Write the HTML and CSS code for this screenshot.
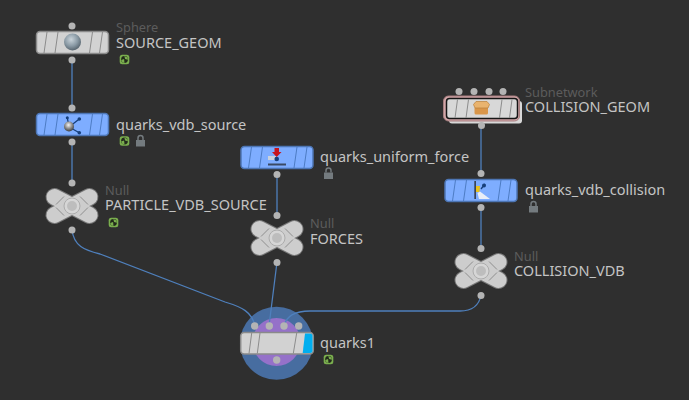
FILE: index.html
```html
<!DOCTYPE html>
<html lang="en">
<head>
<meta charset="utf-8">
<title>Network view</title>
<link rel="stylesheet" href="styles.css">
</head>
<body>
<main class="canvas">
<svg class="graph" width="689" height="400" viewBox="0 0 689 400" xmlns="http://www.w3.org/2000/svg">
  <defs>
    <radialGradient id="ball" cx="0.42" cy="0.35" r="0.7">
      <stop offset="0" stop-color="#c9d3da"/>
      <stop offset="0.55" stop-color="#8a9aa5"/>
      <stop offset="1" stop-color="#4f5c66"/>
    </radialGradient>
    <radialGradient id="ball2" cx="0.45" cy="0.35" r="0.7">
      <stop offset="0" stop-color="#f4f4f4"/>
      <stop offset="0.5" stop-color="#8e8e8e"/>
      <stop offset="1" stop-color="#2e2e2e"/>
    </radialGradient>
    <g id="stripes">
      <path d="M11 1 L8 22 M22 1 L19 22 M56.500 1 L53.500 22 M66.500 1 L63.500 22"/>
    </g>
    <g id="grey-body">
      <rect x="0.500" y="0.500" width="72" height="22" rx="3.500" class="body-grey"/>
      <use href="#stripes" class="stripe-grey"/>
    </g>
    <g id="blue-body">
      <rect x="0.500" y="0.500" width="72" height="22" rx="3.500" class="body-blue"/>
      <use href="#stripes" class="stripe-blue"/>
    </g>
    <g id="null-node">
      <path d="M-17.500 -9 L17.500 9 M-17.500 9 L17.500 -9" class="null-edge"/>
      <path d="M-17.500 -9 L17.500 9 M-17.500 9 L17.500 -9" class="null-fill"/>
      <path d="M-16 -1.500 L-8 -9.500 M16 -1.500 L8 -9.500 M-16 1.500 L-8 9.500 M16 1.500 L8 9.500" class="null-cut"/>
      <circle r="8" class="null-ring"/>
      <circle r="5" class="null-core"/>
    </g>
    <g id="badge">
      <rect x="-4.800" y="-4.800" width="9.600" height="9.600" rx="2.500" class="badge-bg"/>
      <circle r="3.400" class="badge-dark"/>
      <path d="M-3.400 0.600 L-0.400 -0.400 L0 3.400 L-2 3 Z M-0.200 -3.400 L3 -2 L3.400 0.200 L0.600 -0.600 Z" class="badge-light"/>
    </g>
    <g id="lock">
      <path d="M-2.500 -1 V-3 A2.500 2.500 0 0 1 2.500 -3 V-1" class="lock-arc"/>
      <rect x="-4.500" y="-1" width="9" height="6.500" class="lock-body"/>
    </g>
  </defs>

  <circle cx="276.500" cy="343.300" r="36.500" class="halo"/>
  <circle cx="276.500" cy="342" r="24" class="halo-inner"/>

  <g class="wire">
    <path d="M72 60 V108"/>
    <path d="M72 141 V183"/>
    <path d="M277 174 V215"/>
    <path d="M481 125 V173"/>
    <path d="M481 207 V248"/>
    <path d="M72 230 C74 246 84 250 100 254 L225 302 C242 307 252 312 255 326"/>
    <path d="M277 262 L269 326"/>
    <path d="M481 295 C479 306 472 311 460 311 H310 C294 311 286 317 284 326"/>
  </g>

  <use href="#grey-body" x="36" y="31"/>
  <circle cx="72.500" cy="42" r="8.500" fill="url(#ball)"/>
  <circle cx="72" cy="26" r="3.500" class="dot"/>
  <circle cx="72" cy="60" r="3.500" class="dot"/>

  <use href="#blue-body" x="36" y="113"/>
  <path d="M69 127 L67.300 117.700 M69 127 L79.300 119 M69 127 L79.300 132.700" class="icon-navy"/>
  <circle cx="67.300" cy="117.700" r="1.500" class="fill-navy"/>
  <circle cx="79.300" cy="119" r="1.800" class="fill-navy"/>
  <circle cx="79.300" cy="132.700" r="1.800" class="fill-navy"/>
  <circle cx="69" cy="126.500" r="5" fill="url(#ball2)"/>
  <circle cx="72" cy="108" r="3.500" class="dot"/>
  <circle cx="72" cy="142" r="3.500" class="dot"/>

  <use href="#null-node" x="72" y="206"/>
  <circle cx="72" cy="183" r="3.500" class="dot"/>
  <circle cx="72" cy="230" r="3.500" class="dot"/>

  <use href="#blue-body" x="240.500" y="146"/>
  <rect x="268" y="163.500" width="18" height="2" class="force-bar"/>
  <rect x="268" y="156" width="9" height="4" class="force-grey"/>
  <circle cx="276.700" cy="159" r="2.300" class="fill-navy"/>
  <path d="M274.500 148 H279 V152 H281.500 L276.700 157 L272 152 H274.500 Z" class="force-red"/>
  <circle cx="277" cy="174.500" r="3.500" class="dot"/>

  <use href="#null-node" x="277" y="238"/>
  <circle cx="277" cy="215.500" r="3.500" class="dot"/>
  <circle cx="277" cy="262.500" r="3.500" class="dot"/>

  <rect x="449" y="101" width="73" height="22.500" rx="3" class="sub-shadow"/>
  <rect x="443.500" y="96" width="76" height="25" rx="5" class="sub-frame"/>
  <rect x="446.500" y="98.500" width="71" height="20" rx="3" class="sub-inner"/>
  <g transform="translate(445.500 97.500)" class="stripe-grey">
    <path d="M12 2 L9.500 20.500 M23 2 L20.500 20.500 M56.500 2 L54 20.500 M66.500 2 L64 20.500"/>
  </g>
  <path d="M474.500 108 H488 V113 Q488 114.500 486.500 114.500 H476 Q474.500 114.500 474.500 113 Z" class="box-front"/>
  <path d="M473.500 104.500 L476 101.500 H487 L489.500 104.500 L488 108 H475 Z" class="box-top"/>
  <circle cx="459" cy="91.500" r="3.500" class="dot"/>
  <circle cx="474" cy="91.500" r="3.500" class="dot"/>
  <circle cx="489" cy="91.500" r="3.500" class="dot"/>
  <circle cx="503" cy="91.500" r="3.500" class="dot"/>
  <circle cx="481.500" cy="125.500" r="3.500" class="dot"/>

  <use href="#blue-body" x="444.500" y="179"/>
  <rect x="474.300" y="181" width="1.700" height="18" class="col-bar"/>
  <path d="M476 186 H480 L479.500 192 L476 192 Z" class="col-yellow"/>
  <path d="M477.500 193 L480 191.500 L490 199 H479 Z" class="col-white"/>
  <path d="M481 189 L485 184" class="icon-navy"/>
  <circle cx="484" cy="185.500" r="2" class="fill-navy"/>
  <circle cx="481" cy="173.500" r="3.500" class="dot"/>
  <circle cx="481" cy="207.500" r="3.500" class="dot"/>

  <use href="#null-node" x="481" y="271"/>
  <circle cx="481" cy="248.500" r="3.500" class="dot"/>
  <circle cx="481" cy="295.500" r="3.500" class="dot"/>

  <rect x="240.700" y="332.500" width="72.600" height="21.500" rx="3.500" class="body-grey"/>
  <path d="M305 333.500 H310 Q312.500 333.500 312.500 336 V350.500 Q312.500 353 310 353 H302.700 Z" class="flag"/>
  <path d="M251.700 333 L249 353.500 M260 333 L257.300 353.500 M296.700 333 L293.300 353.500" class="stripe-grey"/>
  <circle cx="254.700" cy="326" r="3.700" class="dot"/>
  <circle cx="269.300" cy="326" r="3.700" class="dot"/>
  <circle cx="284" cy="326" r="3.700" class="dot"/>
  <circle cx="298.700" cy="326" r="3.700" class="dot"/>
  <circle cx="276.700" cy="360" r="3.700" class="dot"/>

  <use href="#badge" x="124.500" y="59.500"/>
  <use href="#badge" x="124.500" y="141"/>
  <use href="#badge" x="113.500" y="222.500"/>
  <use href="#badge" x="328.500" y="359.500"/>
  <use href="#lock" x="140.500" y="141"/>
  <use href="#lock" x="328.500" y="173.500"/>
  <use href="#lock" x="533.500" y="207"/>
</svg>

<span class="label type l-sphere">Sphere</span>
<span class="label l-source">SOURCE_GEOM</span>
<span class="label l-vdbsource">quarks_vdb_source</span>
<span class="label type l-null1">Null</span>
<span class="label l-particle">PARTICLE_VDB_SOURCE</span>
<span class="label l-force">quarks_uniform_force</span>
<span class="label type l-null2">Null</span>
<span class="label l-forces">FORCES</span>
<span class="label type l-subnet">Subnetwork</span>
<span class="label l-collgeom">COLLISION_GEOM</span>
<span class="label l-vdbcoll">quarks_vdb_collision</span>
<span class="label type l-null3">Null</span>
<span class="label l-collvdb">COLLISION_VDB</span>
<span class="label l-quarks">quarks1</span>
</main>
</body>
</html>
```

FILE: styles.css
```css
html, body {
  margin: 0;
  padding: 0;
  background: #2f2f2f;
}
.canvas {
  position: relative;
  width: 689px;
  height: 400px;
  overflow: hidden;
  background: #2f2f2f;
}
.graph {
  position: absolute;
  left: 0;
  top: 0;
}
.label {
  position: absolute;
  font-family: "Noto Sans", "Open Sans", sans-serif;
  font-size: 14.500px;
  line-height: 16px;
  color: #c4c4c4;
  white-space: nowrap;
}
.type {
  font-size: 12.800px;
  line-height: 14px;
  color: #5c5c5c;
}
.l-sphere { left: 116px; top: 20px; }
.l-source { left: 116px; top: 34px; }
.l-vdbsource { left: 116px; top: 116px; }
.l-null1 { left: 105px; top: 183px; }
.l-particle { left: 105px; top: 196px; }
.l-force { left: 320px; top: 148px; }
.l-null2 { left: 310px; top: 216px; }
.l-forces { left: 310px; top: 230px; }
.l-subnet { left: 525px; top: 85px; }
.l-collgeom { left: 525px; top: 98px; }
.l-vdbcoll { left: 525px; top: 181px; }
.l-null3 { left: 514px; top: 249px; }
.l-collvdb { left: 514px; top: 262px; }
.l-quarks { left: 320px; top: 334px; }

.wire path {
  fill: none;
  stroke: #4f80bd;
  stroke-width: 1.300;
}
.dot { fill: #b4b4b4; }
.body-grey { fill: #d2d2d2; stroke: #8a8a8a; stroke-width: 1.500; }
.body-blue { fill: #7eadff; stroke: #4d76b5; stroke-width: 1.500; }
.stripe-grey { fill: none; stroke: #8c8c8c; stroke-width: 1; }
.stripe-blue { fill: none; stroke: #4d7cc4; stroke-width: 1; }

.null-edge { fill: none; stroke: #777; stroke-width: 18; stroke-linecap: round; }
.null-fill { fill: none; stroke: #cdcdcd; stroke-width: 16; stroke-linecap: round; }
.null-cut { fill: none; stroke: #8f8f8f; stroke-width: 1; }
.null-ring { fill: #d6d6d6; stroke: #acacac; }
.null-core { fill: #bdbdbd; }

.badge-bg { fill: #7aae4e; }
.badge-dark { fill: #222a1b; }
.badge-light { fill: #7aae4e; }
.lock-arc { fill: none; stroke: #747b7f; stroke-width: 1.500; }
.lock-body { fill: #747b7f; }

.halo { fill: #476da0; }
.halo-inner { fill: #9571c9; }
.flag { fill: #00aeef; }

.icon-navy { fill: none; stroke: #17407c; stroke-width: 1.300; }
.fill-navy { fill: #17407c; }
.force-bar { fill: #3a4a64; }
.force-grey { fill: #c9d2dd; }
.force-red { fill: #c6141c; }

.sub-shadow { fill: #d8d8d8; }
.sub-frame { fill: #d2a6a8; stroke: #a87f80; stroke-width: 1; }
.sub-inner { fill: #d8d8d8; stroke: #161616; stroke-width: 1.500; }
.box-front { fill: #d9964a; }
.box-top { fill: #e9b36e; stroke: #b97f3a; stroke-width: 0.700; }
.col-bar { fill: #3a4456; }
.col-yellow { fill: #e8c21c; }
.col-white { fill: #e9eef7; }
```
